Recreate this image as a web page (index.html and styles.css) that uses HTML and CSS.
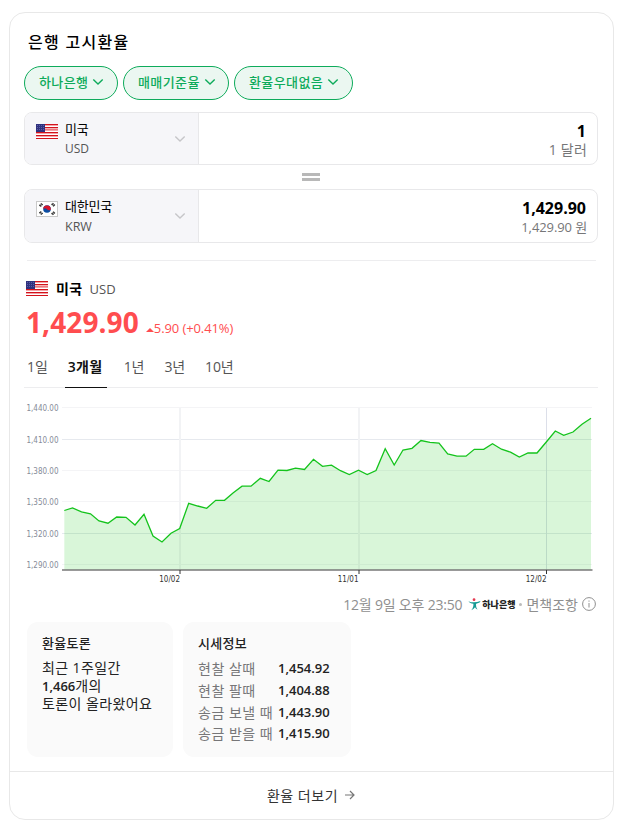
FILE: index.html
```html
<!DOCTYPE html>
<html lang="ko">
<head>
    <meta charset="UTF-8">
    <meta name="viewport" content="width=device-width, initial-scale=1.0">
    <title>은행 고시환율</title>
    <link rel="stylesheet" href="styles.css">
</head>
<body>
    <!-- shared flag + icon shapes -->
    <svg class="defs">
        <symbol id="flag-us" viewBox="0 0 22 15">
            <rect width="22" height="15" fill="#fff"/>
            <path d="M0 .5h22M0 3.5h22M0 8.5h22M0 11.5h22M0 14.5h22" stroke="#d3131c"/>
            <path d="M0 1.5h22M0 5.5h22M0 6.5h22M0 9.5h22M0 12.5h22" stroke="#f3a3a8"/>
            <path d="M0 5h22" stroke="#e23a42" stroke-width=".8"/>
            <rect width="9" height="8" fill="#30327f"/>
            <path d="M1 1.5h8M1 3.5h8M1 5.5h8" stroke="#666ab0" stroke-width=".8" stroke-dasharray="1 1"/>
        </symbol>
        <symbol id="flag-kr" viewBox="0 0 22 16">
            <rect x=".5" y=".5" width="21" height="15" fill="#fff" stroke="#c9c9c9"/>
            <circle cx="11" cy="8" r="3.8" fill="#0b4ea2"/>
            <path d="M7.2 8.3A3.8 3.8 0 0 1 14.8 8.5C13.5 10 12 9.3 11 8.2S8.3 6.5 7.2 8.3z" fill="#d9152b"/>
            <path d="M3.3 4.7l2.6-2.5M4.3 5.5l2.6-2.5M15.5 3l2.6 2.5M16.5 2.2l2.4 2.3M3.3 11.3l2.6 2.5M4.3 10.5l2.6 2.5M15.5 13l2.6-2.5M16.5 13.8l2.4-2.3" stroke="#333" stroke-width="1.2" stroke-dasharray="1.5 .4"/>
        </symbol>
        <symbol id="arrow-down" viewBox="0 0 12 8">
            <path d="M1.3 1.5L6 6l4.7-4.5" fill="none" stroke="currentColor" stroke-width="1.4"/>
        </symbol>
    </svg>

    <section class="card">
        <h2 class="title">은행 고시환율</h2>
        <div class="filters">
            <button class="pill bank">하나은행<svg><use href="#arrow-down"/></svg></button>
            <button class="pill base">매매기준율<svg><use href="#arrow-down"/></svg></button>
            <button class="pill prefer">환율우대없음<svg><use href="#arrow-down"/></svg></button>
        </div>

        <div class="calc">
            <div class="row">
                <div class="nation">
                    <svg class="flag"><use href="#flag-us"/></svg>
                    <div class="names"><b>미국</b><span>USD</span></div>
                    <svg class="arrow"><use href="#arrow-down"/></svg>
                </div>
                <div class="amount"><strong>1</strong><span class="unit">1 달러</span></div>
            </div>
            <div class="equal"><i></i><i></i></div>
            <div class="row krw">
                <div class="nation">
                    <svg class="flag kr"><use href="#flag-kr"/></svg>
                    <div class="names"><b>대한민국</b><span>KRW</span></div>
                    <svg class="arrow"><use href="#arrow-down"/></svg>
                </div>
                <div class="amount"><strong>1,429.90</strong><span class="unit won">1,429.90 원</span></div>
            </div>
        </div>

        <div class="summary">
            <div class="country">
                <svg class="flag"><use href="#flag-us"/></svg>
                <b>미국</b><span>USD</span>
            </div>
            <div class="price">
                <strong>1,429.90</strong>
                <i class="up"></i><span>5.90 (+0.41%)</span>
            </div>
        </div>

        <div class="tabs">
            <a>1일</a>
            <a class="on">3개월</a>
            <a>1년</a>
            <a>3년</a>
            <a>10년</a>
        </div>

        <svg class="chart" viewBox="24 388 574 200">
            <g class="grid">
                <path d="M62 407.5H592M62 470.5H592M62 501.5H592M62 564.5H592"/>
                <path class="major" d="M62 439.5H592M62 533.5H592"/>
                <path class="month" d="M180 408V570M359 408V570"/>
                <path class="last" d="M546.5 408V570"/>
            </g>
            <path class="area" d="M64.3 510.5L72.5 508 81.5 511.8 90.5 513.8 99 521 108 523.2 116.7 517 126 517.3 135 525 144 514.3 153 536 162 542 171 533.3 179.7 528.5 188.7 503.3 197.7 506 206.7 508.3 215.7 500.3 224.5 500.3 233.3 492.7 242 486.2 251 486.2 260.3 478.3 269 481.5 278 470.2 287 470.5 295.5 468.2 304.5 469.5 313.5 459.3 322.5 466.3 331.5 465.2 340.5 470.7 349.3 474.5 358.5 470.2 367.2 474.5 376 470.5 385.2 448.7 394.2 465 403 450 412 448.3 421 440.5 430 442.3 439 443.2 447.7 454 457 456.2 466 456.2 474.3 449.3 483.7 449.3 492.5 443.7 501.5 449.2 510.5 452.2 519.3 457 528 453 537 453 546.3 442 555.3 431 563.7 435.3 573 432 582 424.3 591 418.3V570H64.3z"/>
            <path class="line" d="M64.3 510.5L72.5 508 81.5 511.8 90.5 513.8 99 521 108 523.2 116.7 517 126 517.3 135 525 144 514.3 153 536 162 542 171 533.3 179.7 528.5 188.7 503.3 197.7 506 206.7 508.3 215.7 500.3 224.5 500.3 233.3 492.7 242 486.2 251 486.2 260.3 478.3 269 481.5 278 470.2 287 470.5 295.5 468.2 304.5 469.5 313.5 459.3 322.5 466.3 331.5 465.2 340.5 470.7 349.3 474.5 358.5 470.2 367.2 474.5 376 470.5 385.2 448.7 394.2 465 403 450 412 448.3 421 440.5 430 442.3 439 443.2 447.7 454 457 456.2 466 456.2 474.3 449.3 483.7 449.3 492.5 443.7 501.5 449.2 510.5 452.2 519.3 457 528 453 537 453 546.3 442 555.3 431 563.7 435.3 573 432 582 424.3 591 418.3"/>
            <path class="axis" d="M62 570H592.5"/>
            <path class="tick" d="M180 570v4M359 570v4M546.5 570v4"/>
            <g class="ylabel">
                <text x="58.5" y="411">1,440.00</text>
                <text x="58.5" y="443">1,410.00</text>
                <text x="58.5" y="474">1,380.00</text>
                <text x="58.5" y="505">1,350.00</text>
                <text x="58.5" y="537">1,320.00</text>
                <text x="58.5" y="568">1,290.00</text>
            </g>
            <g class="xlabel">
                <text x="180" y="582">10/02</text>
                <text x="358.5" y="582">11/01</text>
                <text x="546.5" y="582">12/02</text>
            </g>
        </svg>

        <div class="source">
            <span class="time">12월 9일 오후 23:50</span>
            <svg class="hana" viewBox="0 0 14 14">
                <circle cx="6.5" cy="1.8" r="1.5" fill="#e5384f"/>
                <path d="M.5 3.4C4 5.3 9 5 13.500 3.200L12.500 4.800 8.800 6.300C8.600 9 7 12 3.500 13.300 5.500 11 6 8.500 5.800 6.200 3.500 5.800 1.500 5 .5 3.400zM8.700 7.500C8.600 9.500 9.200 11 10.300 12.500 8.500 12 7.500 10.500 7.400 9z" fill="#159a94"/>
            </svg>
            <b class="hana-name">하나은행</b>
            <i class="dot"></i>
            <span class="notice">면책조항</span>
            <svg class="info" viewBox="0 0 14 14">
                <circle cx="7" cy="7" r="6.4"/>
                <path d="M7 6v4.500M7 3.500v1.200"/>
            </svg>
        </div>

        <div class="boxes">
            <div class="box talk">
                <h3>환율토론</h3>
                <p>최근 1주일간<br><b>1,466</b>개의<br>토론이 올라왔어요</p>
            </div>
            <div class="box info-box">
                <h3>시세정보</h3>
                <dl>
                    <dt>현찰 살때</dt><dd>1,454.92</dd>
                    <dt>현찰 팔때</dt><dd>1,404.88</dd>
                    <dt>송금 보낼 때</dt><dd>1,443.90</dd>
                    <dt>송금 받을 때</dt><dd>1,415.90</dd>
                </dl>
            </div>
        </div>

        <a class="more">환율 더보기
            <svg viewBox="0 0 12 10"><path d="M1 5h9M6 1l4 4-4 4"/></svg>
        </a>
    </section>
</body>
</html>
```
FILE: styles.css
```css
* {
    box-sizing: border-box;
}
body {
    margin: 0;
    padding: 12px 11px 0 9px;
    background: #fff;
    font-family: "Open Sans", "Noto Sans CJK KR", sans-serif;
    color: #000;
}
h2, h3, p, dl, dd {
    margin: 0;
}
.defs {
    display: none;
}
.card {
    width: 605px;
    height: 808px;
    border: 1px solid #e8e8e8;
    border-radius: 16px;
    display: flex;
    flex-direction: column;
    white-space: nowrap;
}
.title {
    height: 53px;
    padding: 17px 0 0 18px;
    font-size: 16px;
    line-height: 24px;
    font-weight: 500;
    letter-spacing: 1.3px;
}
.filters {
    display: flex;
    gap: 5px;
    padding-left: 14px;
}
.pill {
    height: 34px;
    padding: 0 0 3px 14px;
    border: 1px solid #0eab5b;
    border-radius: 17px;
    background: #ebf7f1;
    color: #0eab5b;
    font: 500 13px/20px "Open Sans", "Noto Sans CJK KR", sans-serif;
    letter-spacing: 0.4px;
    display: flex;
    align-items: center;
    gap: 4px;
}
.pill svg {
    width: 12px;
    height: 8px;
}
.bank {
    width: 94px;
}
.base {
    width: 106px;
}
.prefer {
    width: 119px;
}
.calc {
    padding: 12px 15px 0 14px;
}
.row {
    display: flex;
    height: 53px;
    border: 1px solid #e8e8ea;
    border-radius: 8px;
    overflow: hidden;
}
.krw {
    height: 54px;
}
.nation {
    width: 174px;
    background: #f6f6f9;
    border-right: 1px solid #e8e8ea;
    display: flex;
    padding: 7px 12px 0 11px;
}
.flag {
    width: 22px;
    height: 15px;
    margin-top: 4px;
}
.kr {
    height: 16px;
}
.names {
    margin-left: 7px;
    flex: 1;
    font-size: 13px;
    line-height: 19px;
}
.names b {
    display: block;
    font-weight: 400;
    letter-spacing: -0.2px;
}
.names span {
    display: block;
    font-size: 12px;
    line-height: 20px;
    color: #555;
}
.krw .names span {
    font-size: 12.5px;
    line-height: 21px;
}
.arrow {
    width: 12px;
    height: 8px;
    margin-top: 15px;
    color: #c6c6c9;
}
.amount {
    flex: 1;
    padding: 8px 10px 0 0;
    text-align: right;
}
.amount strong {
    display: block;
    font-size: 16px;
    line-height: 20px;
    padding-right: 1px;
}
.unit {
    display: block;
    font-size: 14px;
    line-height: 18px;
    color: #767678;
    letter-spacing: 0.2px;
}
.won {
    font-size: 13px;
    letter-spacing: -0.1px;
}
.equal {
    height: 24px;
    display: flex;
    flex-direction: column;
    align-items: center;
    justify-content: center;
    gap: 2px;
}
.equal i {
    width: 18px;
    height: 3px;
    background: #b8b8b8;
}
.summary {
    height: 87px;
    margin: 17px 17px 0;
    border-top: 1px solid #ededef;
}
.country {
    display: flex;
    margin: 16px 0 0 -1px;
    line-height: 24px;
    font-size: 14px;
}
.country b {
    margin: 0 7px 0 8px;
    font-weight: 600;
    letter-spacing: 0.4px;
}
.country span {
    font-size: 13px;
    color: #555;
}
.price {
    display: flex;
    align-items: flex-end;
    margin: -1px 0 0 -1px;
    color: #ff4d4f;
}
.price strong {
    font-size: 28px;
    line-height: 44px;
    letter-spacing: 0.1px;
}
.price span {
    font-size: 13px;
    line-height: 16px;
    margin-bottom: 8px;
    letter-spacing: -0.1px;
}
.up {
    margin: 0 0 12px 7px;
    border: 4px solid transparent;
    border-top: 0;
    border-bottom-color: #ff4d4f;
}
.tabs {
    display: flex;
    height: 41px;
    margin: 0 15px 0 14px;
    padding-left: 3px;
    border-bottom: 1px solid #ededef;
    font-size: 14px;
    line-height: 39px;
    color: #555;
    gap: 20px;
}
.tabs a {
    letter-spacing: -0.1px;
}
.tabs .on {
    width: 42px;
    height: 41px;
    margin: 0 -3px;
    padding: 0 3px;
    border-bottom: 1px solid #111;
    color: #111;
    font-weight: 600;
    letter-spacing: 0.4px;
}
.chart {
    width: 574px;
    height: 200px;
    margin-left: 14px;
    flex: none;
}
.grid path {
    fill: none;
    stroke: #f4f4f6;
}
.grid .major {
    stroke: #e6e9ee;
}
.grid .month {
    stroke: #f2f3f5;
    stroke-width: 2;
}
.grid .last {
    stroke: #dcdfe9;
}
.area {
    fill: #00c000;
    fill-opacity: 0.15;
}
.line {
    fill: none;
    stroke: #14c31c;
    stroke-width: 1.3;
}
.axis {
    stroke: #777;
    stroke-width: 1.4;
}
.tick {
    stroke: #333;
}
.ylabel, .xlabel {
    font-family: "DejaVu Sans Condensed", "DejaVu Sans", sans-serif;
    font-size: 8px;
    text-anchor: end;
    fill: #868c99;
}
.xlabel {
    fill: #333;
}
.source {
    height: 33px;
    padding: 0 17px 1px 0;
    display: flex;
    align-items: center;
    justify-content: flex-end;
    font-size: 14px;
    color: #8f8f8f;
}
.time {
    letter-spacing: -0.2px;
}
.hana {
    width: 13px;
    height: 13px;
    margin: 0 1px 0 6px;
}
.hana-name {
    font-size: 9px;
    font-weight: 900;
    color: #222;
}
.dot {
    width: 3px;
    height: 3px;
    margin: 0 4px;
    border-radius: 50%;
    background: #bbb;
}
.info {
    width: 14px;
    height: 14px;
    margin-left: 4px;
    fill: none;
    stroke: #8f8f8f;
    stroke-width: 1;
}
.boxes {
    display: flex;
    gap: 10px;
    height: 150px;
    padding: 1px 0 14px 17px;
}
.box {
    border-radius: 11px;
    background: #fafafa;
    padding: 12px 0 0 15px;
    color: #222;
}
.talk {
    width: 146px;
}
.info-box {
    width: 168px;
}
.box h3 {
    font-size: 13px;
    line-height: 18px;
    font-weight: 500;
    letter-spacing: 0.3px;
}
.talk p {
    margin-top: 7px;
    font-size: 14px;
    line-height: 18px;
    letter-spacing: 0.4px;
}
.talk p b {
    font-size: 13px;
    font-weight: 600;
    letter-spacing: 0;
}
.info-box dl {
    display: grid;
    grid-template-columns: 80px 1fr;
    margin-top: 6px;
    font-size: 13px;
    line-height: 21.8px;
}
.info-box dt {
    font-size: 14px;
    color: #767678;
    letter-spacing: 0.5px;
}
.info-box dd {
    font-weight: 600;
}
.more {
    flex: 1;
    padding-bottom: 2px;
    border-top: 1px solid #e8e8e8;
    display: flex;
    align-items: center;
    justify-content: center;
    font-size: 14px;
    letter-spacing: 0.5px;
    color: #333;
}
.more svg {
    width: 12px;
    height: 10px;
    margin-left: 6px;
    fill: none;
    stroke: #777;
    stroke-width: 1.2;
}
```
